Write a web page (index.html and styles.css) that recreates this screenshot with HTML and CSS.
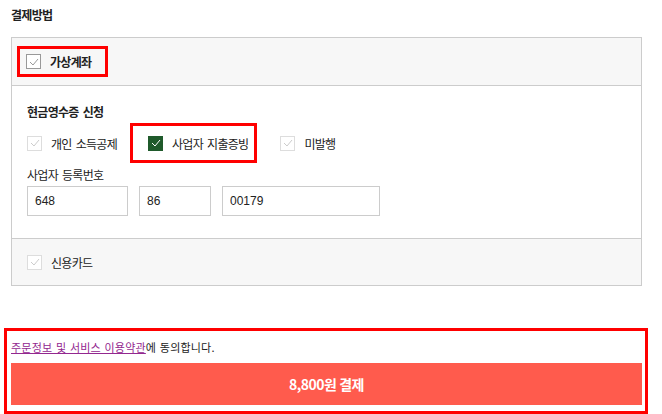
FILE: index.html
```html
<!DOCTYPE html>
<html>
<head>
    <title>결제방법</title>
    <link rel="stylesheet" href="styles.css">
</head>
<body>
    <h2 class="title">결제방법</h2>
    <div class="pay-box">
        <div class="pay-head">
            <label class="option mark">
                <span class="check"><svg width="10" height="8" viewBox="0 0 10 8"><path d="M1 4l3 3 5-6" fill="none" stroke="#999" stroke-width="1"/></svg></span>
                <span class="strong">가상계좌</span>
            </label>
        </div>
        <div class="pay-body">
            <div class="sub-title">현금영수증 신청</div>
            <div class="options">
                <label class="option">
                    <span class="check light"><svg width="10" height="8" viewBox="0 0 10 8"><path d="M1 4l3 3 5-6" fill="none" stroke="#ccc" stroke-width="1"/></svg></span>
                    개인 소득공제
                </label>
                <label class="option mark wide">
                    <span class="check on"><svg width="10" height="8" viewBox="0 0 10 8"><path d="M1 4l3 3 5-6" fill="none" stroke="#fff" stroke-width="1"/></svg></span>
                    사업자 지출증빙
                </label>
                <label class="option">
                    <span class="check light"><svg width="10" height="8" viewBox="0 0 10 8"><path d="M1 4l3 3 5-6" fill="none" stroke="#ccc" stroke-width="1"/></svg></span>
                    미발행
                </label>
            </div>
            <div class="field-label">사업자 등록번호</div>
            <div class="biz-num">
                <input class="in-1" type="text" value="648">
                <input class="in-2" type="text" value="86">
                <input class="in-3" type="text" value="00179">
            </div>
        </div>
        <div class="pay-foot">
            <label class="option">
                <span class="check light"><svg width="10" height="8" viewBox="0 0 10 8"><path d="M1 4l3 3 5-6" fill="none" stroke="#ccc" stroke-width="1"/></svg></span>
                신용카드
            </label>
        </div>
    </div>

    <div class="agree-box">
        <p class="agree"><a href="#">주문정보 및 서비스 이용약관</a>에 동의합니다.</p>
        <button class="pay-btn">8,800원 결제</button>
    </div>
</body>
</html>
```

FILE: styles.css
```css
body {
    margin: 0;
    padding: 0 20px 0 11px;
    font-family: "Noto Sans CJK KR", "Noto Sans", sans-serif;
    font-size: 12px;
    color: #222;
    letter-spacing: -0.7px;
    word-spacing: 2px;
}
.title {
    margin: 0;
    padding-top: 6px;
    height: 31px;
    font-size: 12px;
    font-weight: bold;
}
.pay-box {
    border: 1px solid #ccc;
}
.pay-head {
    height: 47px;
    background: #f7f7f7;
    border-bottom: 1px solid #ccc;
    display: flex;
    align-items: center;
    padding-left: 5px;
}
.option {
    display: inline-flex;
    align-items: center;
    gap: 9px;
}
.option.mark {
    border: 3px solid #ff0000;
    height: 25px;
    padding: 0 14px 0 6px;
}
.strong {
    font-weight: bold;
}
.check {
    width: 13px;
    height: 13px;
    border: 1px solid #999;
    background: #fff;
    display: inline-flex;
    align-items: center;
    justify-content: center;
}
.check.light {
    border-color: #ddd;
}
.check.on {
    background: #1f5a2b;
    border-color: #1f5a2b;
}
.pay-body {
    padding: 16px 15px 22px;
}
.sub-title {
    font-weight: bold;
    height: 20px;
    line-height: 20px;
}
.options {
    display: flex;
    align-items: center;
    height: 40px;
    margin-top: 1px;
}
.options .option {
    margin-right: 13px;
}
.options .option.mark {
    height: 34px;
    padding: 0 6px 0 15px;
    margin-right: 23px;
}
.field-label {
    margin-top: 3px;
    height: 18px;
    line-height: 18px;
}
.biz-num {
    display: flex;
    gap: 11px;
    margin-top: 2px;
}
.biz-num input {
    height: 30px;
    box-sizing: border-box;
    border: 1px solid #ccc;
    padding: 0 7px;
    font-family: "Liberation Sans", Arial, sans-serif;
    font-size: 12px;
    color: #222;
    letter-spacing: 0;
}
.in-1 { width: 101px; }
.in-2 { width: 72px; }
.in-3 { width: 158px; }
.pay-foot {
    height: 46px;
    background: #f7f7f7;
    border-top: 1px solid #ccc;
    display: flex;
    align-items: center;
    padding-left: 15px;
}
.agree-box {
    margin: 42px -6px 0 -7px;
    border: 3px solid #ff0000;
    padding: 3px 3px 6px 4px;
}
.agree {
    margin: 0;
    height: 29px;
    line-height: 26px;
    font-size: 11px;
    letter-spacing: 0.2px;
    word-spacing: 1px;
}
.agree a {
    color: #93278f;
}
.pay-btn {
    display: block;
    width: 100%;
    height: 42px;
    border: 0;
    background: #ff5b4d;
    color: #fff;
    font-family: "Noto Sans CJK KR", sans-serif;
    font-size: 14px;
    font-weight: bold;
    letter-spacing: -0.5px;
}
```
